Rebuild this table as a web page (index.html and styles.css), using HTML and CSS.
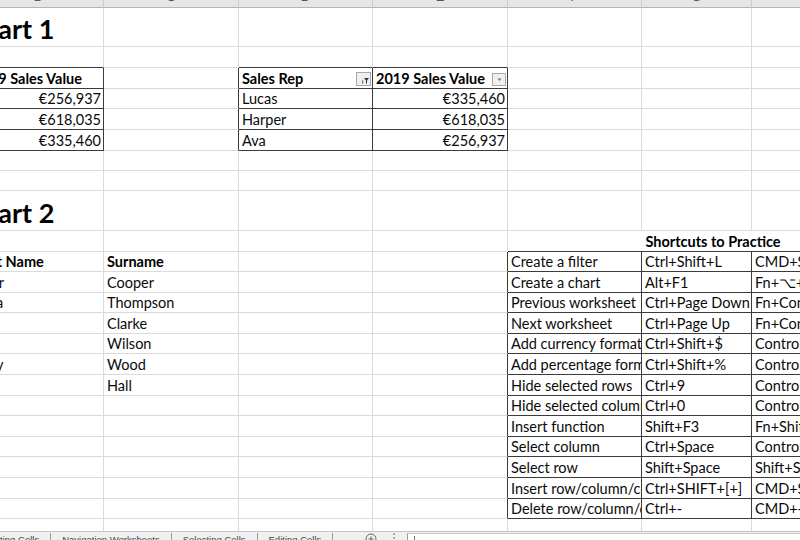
FILE: index.html
```html
<!DOCTYPE html>
<html lang="en">
<head>
<meta charset="utf-8">
<title>Shortcuts workbook</title>
<link rel="stylesheet" href="styles.css">
</head>
<body>
<div class="sheet">
<table class="grid">
<colgroup><col class="cB"><col class="cC"><col class="cD"><col class="cE"><col class="cF"><col class="cG"><col class="cH"></colgroup>
<thead>
<tr class="hdr">
<th><div class="lt"><span>B</span></div></th>
<th><div class="lt"><span>C</span></div></th>
<th><div class="lt"><span>D</span></div></th>
<th><div class="lt"><span>E</span></div></th>
<th><div class="lt"><span>F</span></div></th>
<th><div class="lt"><span>G</span></div></th>
<th><div class="lt"><span>H</span></div></th>
</tr>
</thead>
<tbody>
<tr class="h39"><td class="title">Part 1</td><td></td><td></td><td></td><td></td><td></td><td></td></tr>
<tr class="h21"><td class="db"></td><td></td><td class="db"></td><td class="db"></td><td></td><td></td><td></td></tr>
<tr class="h21"><td class="b dr db">2019 Sales Value</td><td class="dr"></td>
<td class="b dr db btncell"><div class="hc"><span>Sales Rep</span><span class="fbtn sort"><svg width="13" height="12" viewBox="0 0 13 12"><path d="M5 7.5h1.2v3H5z" fill="#666"/><path d="M7 5h5l-2 2.5v3H9v-3z" fill="#333"/></svg></span></div></td>
<td class="b dr db btncell"><div class="hc"><span>2019 Sales Value</span><span class="fbtn"><svg width="11" height="11" viewBox="0 0 11 11"><path d="M3.5 4.5h4L5.5 7z" fill="#777"/></svg></span></div></td>
<td></td><td></td><td></td></tr>
<tr class="h20"><td class="n dr db">€256,937</td><td class="dr"></td><td class="dr db">Lucas</td><td class="n dr db">€335,460</td><td></td><td></td><td></td></tr>
<tr class="h21"><td class="n dr db">€618,035</td><td class="dr"></td><td class="dr db">Harper</td><td class="n dr db">€618,035</td><td></td><td></td><td></td></tr>
<tr class="h21"><td class="n dr db">€335,460</td><td class="dr"></td><td class="dr db">Ava</td><td class="n dr db">€256,937</td><td></td><td></td><td></td></tr>
<tr class="h20"><td></td><td></td><td></td><td></td><td></td><td></td><td></td></tr>
<tr class="h20"><td></td><td></td><td></td><td></td><td></td><td></td><td></td></tr>
<tr class="h40"><td class="title">Part 2</td><td></td><td></td><td></td><td></td><td></td><td></td></tr>
<tr class="h21"><td></td><td></td><td></td><td></td><td class="b ctr db" colspan="3">Shortcuts to Practice</td></tr>
<tr class="h20"><td class="b">First Name</td><td class="b">Surname</td><td></td><td class="dr"></td><td class="dr db">Create a filter</td><td class="dr db">Ctrl+Shift+L</td><td class="dr db">CMD+Shift+F</td></tr>
<tr class="h21"><td>Tyler</td><td>Cooper</td><td></td><td class="dr"></td><td class="dr db">Create a chart</td><td class="dr db">Alt+F1</td><td class="dr db">Fn+⌥+F1</td></tr>
<tr class="h20"><td>Rosa</td><td>Thompson</td><td></td><td class="dr"></td><td class="dr db">Previous worksheet</td><td class="dr db">Ctrl+Page Down</td><td class="dr db">Fn+Control+Down</td></tr>
<tr class="h21"><td>Joe</td><td>Clarke</td><td></td><td class="dr"></td><td class="dr db">Next worksheet</td><td class="dr db">Ctrl+Page Up</td><td class="dr db">Fn+Control+Up</td></tr>
<tr class="h20"><td>Ian</td><td>Wilson</td><td></td><td class="dr"></td><td class="dr db">Add currency format</td><td class="dr db">Ctrl+Shift+$</td><td class="dr db">Control+Shift+$</td></tr>
<tr class="h21"><td>Toby</td><td>Wood</td><td></td><td class="dr"></td><td class="dr db">Add percentage format</td><td class="dr db">Ctrl+Shift+%</td><td class="dr db">Control+Shift+%</td></tr>
<tr class="h21"><td>Eve</td><td>Hall</td><td></td><td class="dr"></td><td class="dr db">Hide selected rows</td><td class="dr db">Ctrl+9</td><td class="dr db">Control+9</td></tr>
<tr class="h20"><td></td><td></td><td></td><td class="dr"></td><td class="dr db">Hide selected columns</td><td class="dr db">Ctrl+0</td><td class="dr db">Control+0</td></tr>
<tr class="h21"><td></td><td></td><td></td><td class="dr"></td><td class="dr db">Insert function</td><td class="dr db">Shift+F3</td><td class="dr db">Fn+Shift+F3</td></tr>
<tr class="h20"><td></td><td></td><td></td><td class="dr"></td><td class="dr db">Select column</td><td class="dr db">Ctrl+Space</td><td class="dr db">Control+Space</td></tr>
<tr class="h21"><td></td><td></td><td></td><td class="dr"></td><td class="dr db">Select row</td><td class="dr db">Shift+Space</td><td class="dr db">Shift+Space</td></tr>
<tr class="h21"><td></td><td></td><td></td><td class="dr"></td><td class="dr db">Insert row/column/cell</td><td class="dr db">Ctrl+SHIFT+[+]</td><td class="dr db">CMD+Shift+[+]</td></tr>
<tr class="h20"><td></td><td></td><td></td><td class="dr"></td><td class="dr db">Delete row/column/cell</td><td class="dr db">Ctrl+-</td><td class="dr db">CMD+-</td></tr>
<tr class="h13"><td></td><td></td><td></td><td></td><td></td><td></td><td></td></tr>
</tbody>
</table>
</div>
<div class="tabs">
<div class="tab first">Formatting Cells</div>
<div class="tab">Navigation Worksheets</div>
<div class="tab">Selecting Cells</div>
<div class="tab">Editing Cells</div>
<div class="add"><svg width="12" height="12" viewBox="0 0 12 12"><circle cx="6" cy="6" r="5" fill="none" stroke="#666" stroke-width="1"/><path d="M6 3.5v5M3.5 6h5" stroke="#666" stroke-width="1"/></svg></div>
<div class="more">⋮</div>
<div class="hscroll"><span class="tick"></span></div>
</div>
</body>
</html>
```

FILE: styles.css
```css
* { box-sizing: border-box; }
html, body { margin: 0; padding: 0; background: #fff; }
body {
  width: 800px;
  height: 540px;
  overflow: hidden;
  font-family: Lato, "Liberation Sans", sans-serif;
  color: #0a0a0a;
}
.sheet { height: 531px; overflow: hidden; }
.grid {
  border-collapse: separate;
  border-spacing: 0;
  table-layout: fixed;
  width: 945px;
  margin-left: -27px;
}
.cB { width: 131px; }
.cC { width: 135px; }
.cD { width: 134px; }
.cE { width: 135px; }
.cF { width: 134px; }
.cG { width: 110px; }
.cH { width: 166px; }

.hdr th {
  height: 8px;
  padding: 0;
  background: #e6e6e6;
  border-right: 1px solid #cdcdcd;
  border-bottom: 1px solid #b5b5b5;
  font-weight: normal;
  overflow: hidden;
}
.lt {
  height: 7px;
  overflow: hidden;
  font-family: "Liberation Sans", sans-serif;
  font-size: 13px;
  line-height: 14px;
  color: #555;
  text-align: center;
}
.lt span { display: block; margin-top: -10px; }

.grid td {
  padding: 0 2px 1px 3px;
  border-right: 1px solid #dadada;
  border-bottom: 1px solid #dadada;
  white-space: nowrap;
  overflow: hidden;
  vertical-align: bottom;
  font-size: 14.5px;
  line-height: 17px;
}
.grid td:first-child { padding-left: 0; }
.h39 { height: 39px; }
.h40 { height: 40px; }
.h21 { height: 21px; }
.h20 { height: 20px; }
.h13 { height: 13px; }

.grid td.dr { border-right-color: #3b3b3b; }
.grid td.db { border-bottom-color: #3b3b3b; }
.b { font-weight: 700; color: #000; }
.n { text-align: right; }
.ctr { text-align: center; }

.grid td.title {
  font-size: 27px;
  font-weight: 700;
  line-height: 31px;
  padding-left: 9px;
  padding-bottom: 2px;
  overflow: visible;
  color: #000;
}

.grid td.btncell { padding-right: 1px; }
.hc { display: flex; align-items: flex-end; justify-content: space-between; }
.fbtn {
  width: 14px;
  height: 13px;
  margin-bottom: 1px;
  border: 1px solid #a8a8a8;
  background: #f0f0f0;
  display: flex;
  align-items: center;
  justify-content: center;
  flex: none;
}
.fbtn.sort { width: 15px; height: 14px; }
.fbtn svg { display: block; }

.tabs {
  height: 9px;
  border-top: 1px solid #c4c4c4;
  background: #f0f0f0;
  display: flex;
  align-items: flex-start;
  overflow: hidden;
  font-family: "Liberation Sans", sans-serif;
  font-size: 9.5px;
  color: #444;
}
.tab {
  padding: 0 11px;
  line-height: 14px;
  border-right: 1px solid #9c9c9c;
  white-space: nowrap;
  margin-top: 1px;
}
.tab.first { margin-left: -41px; }
.add { margin-left: 32px; padding-top: 1px; }
.add svg { display: block; }
.more { margin-left: 11px; font-size: 12px; line-height: 12px; color: #888; }
.hscroll {
  margin-left: 7px;
  margin-top: 1px;
  flex: 1;
  height: 10px;
  background: #fff;
  border-left: 1px solid #9c9c9c;
  border-top: 1px solid #c8c8c8;
  display: flex;
}
.tick { width: 1px; height: 6px; background: #777; margin: 2px 0 0 6px; }
```
